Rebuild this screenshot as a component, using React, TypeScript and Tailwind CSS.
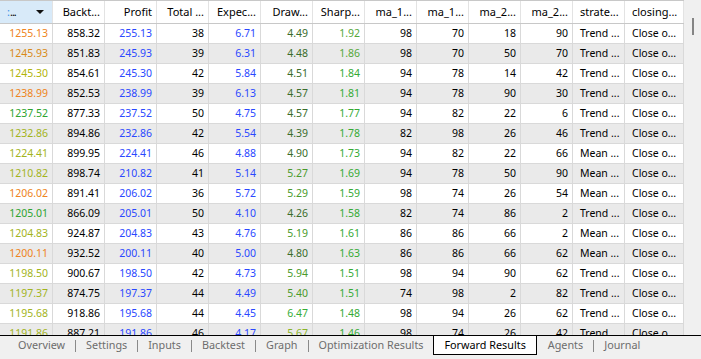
import clsx from 'clsx'

type Row = {
  result: string
  rc: string
  back: string
  profit: string
  trades: string
  exp: string
  dd: string
  ddc: string
  sharpe: string
  sc: string
  m1: string
  m2: string
  m3: string
  m4: string
  strat: string
}

const OR = 'text-[#ee8420]'
const AM = 'text-[#d98a18]'
const YE = 'text-[#b2b40a]'
const GR = 'text-[#2ea42e]'
const OL = 'text-[#a3b41c]'

const DK = 'text-[#3a6d2c]'
const MD = 'text-[#4a9a2a]'
const LG = 'text-[#36ad36]'
const YG = 'text-[#8ab428]'

const S1 = 'text-[#55a83a]'
const S2 = 'text-[#34aa34]'

const ROWS: Row[] = [
  { result: '1255.13', rc: OR, back: '858.32', profit: '255.13', trades: '38', exp: '6.71', dd: '4.49', ddc: DK, sharpe: '1.92', sc: S1, m1: '98', m2: '70', m3: '18', m4: '90', strat: 'Trend ...' },
  { result: '1245.93', rc: AM, back: '851.83', profit: '245.93', trades: '39', exp: '6.31', dd: '4.48', ddc: DK, sharpe: '1.86', sc: S1, m1: '98', m2: '70', m3: '50', m4: '70', strat: 'Trend ...' },
  { result: '1245.30', rc: YE, back: '854.61', profit: '245.30', trades: '42', exp: '5.84', dd: '4.51', ddc: DK, sharpe: '1.84', sc: S2, m1: '94', m2: '78', m3: '14', m4: '42', strat: 'Trend ...' },
  { result: '1238.99', rc: OR, back: '852.53', profit: '238.99', trades: '39', exp: '6.13', dd: '4.57', ddc: DK, sharpe: '1.81', sc: S2, m1: '94', m2: '78', m3: '90', m4: '30', strat: 'Trend ...' },
  { result: '1237.52', rc: GR, back: '877.33', profit: '237.52', trades: '50', exp: '4.75', dd: '4.57', ddc: DK, sharpe: '1.77', sc: S2, m1: '94', m2: '82', m3: '22', m4: '6', strat: 'Trend ...' },
  { result: '1232.86', rc: OL, back: '894.86', profit: '232.86', trades: '42', exp: '5.54', dd: '4.39', ddc: DK, sharpe: '1.78', sc: S2, m1: '82', m2: '98', m3: '26', m4: '46', strat: 'Trend ...' },
  { result: '1224.41', rc: OL, back: '899.95', profit: '224.41', trades: '46', exp: '4.88', dd: '4.90', ddc: DK, sharpe: '1.73', sc: S2, m1: '94', m2: '82', m3: '22', m4: '66', strat: 'Mean ...' },
  { result: '1210.82', rc: OL, back: '898.74', profit: '210.82', trades: '41', exp: '5.14', dd: '5.27', ddc: MD, sharpe: '1.69', sc: S2, m1: '94', m2: '78', m3: '50', m4: '90', strat: 'Mean ...' },
  { result: '1206.02', rc: OR, back: '891.41', profit: '206.02', trades: '36', exp: '5.72', dd: '5.29', ddc: MD, sharpe: '1.59', sc: S2, m1: '98', m2: '74', m3: '26', m4: '54', strat: 'Mean ...' },
  { result: '1205.01', rc: GR, back: '866.09', profit: '205.01', trades: '50', exp: '4.10', dd: '4.26', ddc: DK, sharpe: '1.58', sc: S2, m1: '82', m2: '74', m3: '86', m4: '2', strat: 'Trend ...' },
  { result: '1204.83', rc: OL, back: '924.87', profit: '204.83', trades: '43', exp: '4.76', dd: '5.19', ddc: MD, sharpe: '1.61', sc: S2, m1: '86', m2: '86', m3: '66', m4: '2', strat: 'Mean ...' },
  { result: '1200.11', rc: OR, back: '932.52', profit: '200.11', trades: '40', exp: '5.00', dd: '4.80', ddc: DK, sharpe: '1.63', sc: S2, m1: '86', m2: '86', m3: '66', m4: '62', strat: 'Mean ...' },
  { result: '1198.50', rc: OL, back: '900.67', profit: '198.50', trades: '42', exp: '4.73', dd: '5.94', ddc: MD, sharpe: '1.51', sc: S2, m1: '98', m2: '94', m3: '90', m4: '62', strat: 'Trend ...' },
  { result: '1197.37', rc: OL, back: '874.75', profit: '197.37', trades: '44', exp: '4.49', dd: '5.40', ddc: MD, sharpe: '1.51', sc: S2, m1: '74', m2: '98', m3: '2', m4: '82', strat: 'Trend ...' },
  { result: '1195.68', rc: OL, back: '918.86', profit: '195.68', trades: '44', exp: '4.45', dd: '6.47', ddc: LG, sharpe: '1.48', sc: S2, m1: '98', m2: '94', m3: '26', m4: '62', strat: 'Trend ...' },
  { result: '1191.86', rc: OL, back: '887.21', profit: '191.86', trades: '46', exp: '4.17', dd: '5.67', ddc: YG, sharpe: '1.46', sc: S2, m1: '98', m2: '74', m3: '26', m4: '42', strat: 'Trend ...' },
]

const HEAD = ['Backt...', 'Profit', 'Total ...', 'Expec...', 'Draw...', 'Sharp...', 'ma_1...', 'ma_1...', 'ma_2...', 'ma_2...']

const TABS = ['Overview', 'Settings', 'Inputs', 'Backtest', 'Graph', 'Optimization Results']

const BLUE = 'text-[#2a48ff]'

function Cell({ children, className, w = 'w-[52px]', left }: { children: React.ReactNode; className?: string; w?: string; left?: boolean }) {
  return (
    <div
      className={clsx(
        'h-full shrink-0 overflow-hidden whitespace-nowrap border-r border-[#d9d9d9] flex items-center',
        w,
        left ? 'justify-start pl-[7px]' : 'justify-end pr-[4px]',
        className,
      )}
    >
      {children}
    </div>
  )
}

export default function App() {
  return (
    <div
      className="flex h-[359px] w-[701px] flex-col overflow-hidden bg-[#f0f0f0] text-[10.5px] text-black"
      style={{ fontFamily: '"Noto Sans", "Open Sans", sans-serif' }}
    >
      <div className="flex h-[335px] shrink-0">
        <div className="w-[684px] shrink-0 overflow-hidden bg-white">
          {/* header */}
          <div className="flex h-[24px] border-t border-b border-[#c8c8c8] bg-white text-[11px]">
            <div className="flex h-full w-[53px] shrink-0 items-center border-r border-[#e3e3e3] bg-[#d8eaf9] pl-[7px]">
              <span className="text-[#3a8ee6]">:</span>
              <span className="tracking-[-1px]">...</span>
              <svg width="9" height="5" viewBox="0 0 9 5" className="ml-[20px]">
                <path d="M0 0H8L4 4Z" fill="#111" />
              </svg>
            </div>
            {HEAD.map((h, i) => (
              <Cell key={i} className="border-[#e3e3e3]">
                {h}
              </Cell>
            ))}
            <Cell left className="border-[#e3e3e3]">strate...</Cell>
            <Cell left w="w-[59px]" className="border-[#e3e3e3]">
              closing...
            </Cell>
          </div>
          {ROWS.map((r, i) => (
            <div
              key={i}
              className={clsx('flex h-[20px] border-b border-[#d9d9d9]', i % 2 === 1 ? 'bg-[#eaeaea]' : 'bg-white')}
            >
              <Cell w="w-[53px]" className={r.rc}>
                {r.result}
              </Cell>
              <Cell>{r.back}</Cell>
              <Cell className={BLUE}>{r.profit}</Cell>
              <Cell>{r.trades}</Cell>
              <Cell className={BLUE}>{r.exp}</Cell>
              <Cell className={r.ddc}>{r.dd}</Cell>
              <Cell className={r.sc}>{r.sharpe}</Cell>
              <Cell>{r.m1}</Cell>
              <Cell>{r.m2}</Cell>
              <Cell>{r.m3}</Cell>
              <Cell>{r.m4}</Cell>
              <Cell left>{r.strat}</Cell>
              <Cell left w="w-[59px]">
                Close o...
              </Cell>
            </div>
          ))}
        </div>
        <div className="w-[17px] shrink-0 bg-[#f0f0f0]">
          <div className="ml-[8px] mt-[18px] h-[17px] w-[2px] bg-[#858585]" />
        </div>
      </div>

      {/* tab bar */}
      <div className="flex h-[24px] shrink-0 items-start border-t border-black bg-[#f0f0f0] pl-[18px] text-[10.8px] text-[#6d6d6d]">
        {TABS.map((t, i) => (
          <div key={t} className="flex h-[19px] items-center">
            {i > 0 && <div className="mx-[10px] h-[12px] w-px bg-[#8a8a8a]" />}
            <span>{t}</span>
          </div>
        ))}
        <div className="ml-[10px] flex h-[19px] items-center border-x border-b border-black bg-white px-[10px] text-black">
          Forward Results
        </div>
        <div className="ml-[11px] flex h-[19px] items-center">
          <span>Agents</span>
          <div className="mx-[10px] h-[12px] w-px bg-[#8a8a8a]" />
          <span>Journal</span>
        </div>
      </div>
    </div>
  )
}
